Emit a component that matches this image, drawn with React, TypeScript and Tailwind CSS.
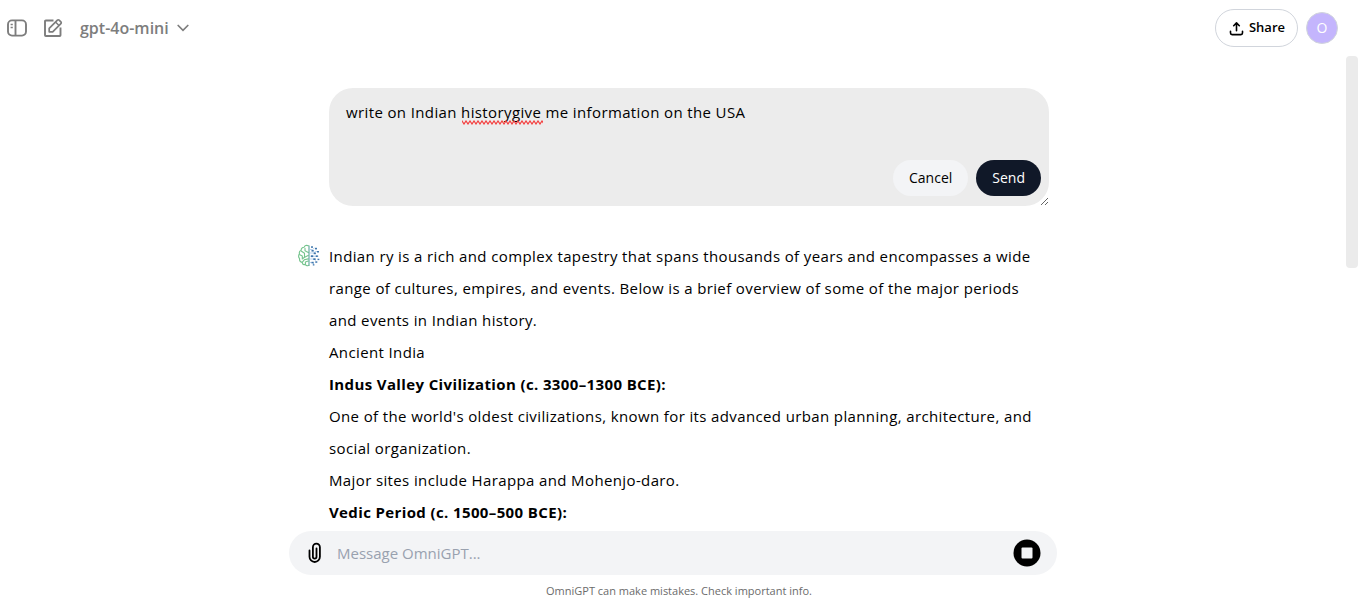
import { useState } from "react";
import type { ReactNode } from "react";

function SidebarIcon() {
  return (
    <svg width="20" height="20" viewBox="0 0 20 20" fill="none" stroke="currentColor" strokeWidth="1.9" aria-hidden="true">
      <rect x="1" y="2.400" width="18" height="15.200" rx="4" />
      <path d="M8.500 2.400v15.200" />
      <path d="M3.600 6.500h2.200M3.600 9.500h2.200" strokeWidth="1.500" />
    </svg>
  );
}

function EditIcon() {
  return (
    <svg width="20" height="20" viewBox="0 0 20 20" fill="none" stroke="currentColor" strokeWidth="1.900" aria-hidden="true">
      <path d="M10.500 2.500H2.800a.8.8 0 0 0-.8.8v13.900a.8.8 0 0 0 .8.8h13.900a.8.8 0 0 0 .8-.8V9.500" />
      <path d="M6.200 13.800v-3.500l8.200-8.200a1.200 1.200 0 0 1 1.700 0l1.800 1.800a1.200 1.200 0 0 1 0 1.700l-8.200 8.200z" strokeWidth="1.700" strokeLinejoin="round" />
      <path d="M12.500 4l3.500 3.500" strokeWidth="1.500" />
    </svg>
  );
}

function ShareIcon() {
  return (
    <svg width="15" height="15" viewBox="0 0 15 15" fill="none" stroke="currentColor" strokeWidth="1.600" strokeLinecap="round" strokeLinejoin="round" aria-hidden="true">
      <path d="M7.500 9.800V2.200M4.700 4.700l2.800-2.800 2.800 2.800" />
      <path d="M1.500 10.200v1.800a1.600 1.600 0 0 0 1.600 1.600h8.800a1.600 1.600 0 0 0 1.600-1.600v-1.800" />
    </svg>
  );
}

function ClipIcon() {
  return (
    <svg width="14" height="22" viewBox="0 0 14 22" fill="none" stroke="currentColor" strokeWidth="1.800" strokeLinecap="round" aria-hidden="true">
      <path d="M1.500 8.500v6.300a5.200 5.200 0 0 0 10.400 0V5.200a3.500 3.500 0 0 0-7 0v9.600a1.800 1.800 0 0 0 3.600 0V6.500" />
    </svg>
  );
}

function BrainLogo() {
  return (
    <svg className="mt-1 shrink-0" width="24" height="24" viewBox="0 0 24 24" fill="none" role="img" aria-label="OmniGPT">
      <g stroke="#74c48c" strokeWidth="1.100" strokeLinecap="round" strokeLinejoin="round">
        <path d="M11.300 1.800C9.500.9 7.600 1.600 7.200 3.200 5.300 3.100 4 4.600 4.200 6.300 2.600 7 2 8.500 2.500 10 1.200 11.300 1.400 13.500 2.600 14.500 2.300 16.600 3.500 18 5 18.300 5.400 20 6.900 20.800 8.300 20.500 9.100 21.800 10.600 22 11.300 21.300" />
        <path d="M8 4.200v2.600l3.300 1.800M4.500 7.200l3 2.100v3.200M2.800 10.700l2.500 1.200v3M5.400 14.700l2.300-1.500 3.400-1.600M5.200 18.300l2-2.500 4-.9M8.400 20.300v-2.200l2.800-1" />
      </g>
      <path d="M12 1.500v20.500" stroke="#4a9c8c" strokeWidth="1" />
      <g stroke="#a3c4e6" strokeWidth=".8">
        <path d="M12.500 5.500h3l2-1.500M12.500 9h4l2-1.500h2M12.500 12.200h9M12.500 15h4l2.500 1.500M12.500 18.500h3l1.500 1.500" />
      </g>
      <g fill="#3f77ad">
        <rect x="14" y="2.300" width="2" height="1.500" />
        <rect x="18" y="3.800" width="2" height="1.600" />
        <rect x="14.500" y="6" width="2.200" height="1.600" />
        <rect x="20" y="7" width="2" height="1.500" />
        <rect x="16.700" y="8.500" width="2.200" height="1.700" />
        <rect x="14" y="11.300" width="2.200" height="1.800" />
        <rect x="18.800" y="11.400" width="2" height="1.600" />
        <rect x="16.300" y="14.300" width="2.300" height="1.700" />
        <rect x="20.500" y="14.700" width="1.800" height="1.400" />
        <rect x="18.300" y="17.300" width="2" height="1.500" />
        <rect x="14.500" y="17.800" width="2.200" height="1.600" />
        <rect x="15.800" y="20.200" width="1.600" height="1.300" />
      </g>
    </svg>
  );
}

function Squiggle() {
  return (
    <svg className="pointer-events-none absolute left-[133px] top-8" width="81" height="5" aria-hidden="true">
      <defs>
        <pattern id="wave" width="4" height="5" patternUnits="userSpaceOnUse">
          <path d="M-2 4L0 1L2 4L4 1L6 4" fill="none" stroke="#f43b3b" strokeWidth="1.200" />
        </pattern>
      </defs>
      <rect width="81" height="5" fill="url(#wave)" />
    </svg>
  );
}

function IconButton({ label, children }: { label: string; children: ReactNode }) {
  return (
    <button type="button" aria-label={label} className="flex size-5 items-center justify-center text-[#7d7d7d]">
      {children}
    </button>
  );
}

export default function App() {
  const [prompt, setPrompt] = useState("write on Indian historygive me information on the USA");
  const [message, setMessage] = useState("");

  return (
    <div className="flex h-screen flex-col bg-white font-['Segoe_UI','Open_Sans',sans-serif] text-black">
      <header className="flex h-14 shrink-0 items-center justify-between pl-[7px] pr-5">
        <div className="flex items-center gap-4">
          <IconButton label="Toggle sidebar"><SidebarIcon /></IconButton>
          <IconButton label="New chat"><EditIcon /></IconButton>
          <button type="button" className="flex items-center gap-2 pl-px text-base font-semibold text-[#7d7d7d]">
            gpt-4o-mini
            <svg width="12" height="8" viewBox="0 0 12 8" fill="none" stroke="currentColor" strokeWidth="1.700" strokeLinecap="round" aria-hidden="true">
              <path d="M1.200 1.500L6 6.300l4.800-4.800" />
            </svg>
          </button>
        </div>
        <div className="flex items-center gap-2">
          <button type="button" className="flex h-[38px] items-center gap-1 rounded-full border border-gray-300 px-3 text-[13px] font-semibold">
            <span className="flex w-[17px] justify-center"><ShareIcon /></span>
            Share
          </button>
          <button type="button" aria-label="Account" className="size-8 rounded-full border border-gray-300 bg-[#c4b5fd] text-sm text-white">
            O
          </button>
        </div>
      </header>

      <div className="flex min-h-0 flex-1">
        <main className="min-w-0 flex-1 overflow-hidden pt-8">
          <div className="mx-auto max-w-3xl px-2">
            <div className="relative ml-8">
              <textarea
                aria-label="Edit message"
                value={prompt}
                spellCheck={false}
                onChange={(event) => setPrompt(event.target.value)}
                className="block h-[118px] w-full resize rounded-3xl bg-[#ececec] px-[17px] py-3 text-[15px] leading-6 tracking-wide outline-none"
              />
              <Squiggle />
              <div className="absolute bottom-[10px] right-2 flex gap-2 text-sm">
                <button type="button" className="h-9 rounded-full bg-gray-100 px-4">Cancel</button>
                <button type="button" className="h-9 rounded-full bg-gray-900 px-4 text-white">Send</button>
              </div>
            </div>

            <article className="mt-[34px] flex gap-2 text-[15px] leading-8 tracking-wide">
              <BrainLogo />
              <div className="min-w-0 flex-1">
                <p>
                  Indian ry is a rich and complex tapestry that spans thousands of years and encompasses a wide
                  range of cultures, empires, and events. Below is a brief overview of some of the major periods
                  and events in Indian history.
                </p>
                <p>Ancient India</p>
                <h3 className="font-bold">Indus Valley Civilization (c. 3300–1300 BCE):</h3>
                <p>
                  One of the world's oldest civilizations, known for its advanced urban planning, architecture, and
                  social organization.
                </p>
                <p>Major sites include Harappa and Mohenjo-daro.</p>
                <h3 className="font-bold">Vedic Period (c. 1500–500 BCE):</h3>
              </div>
            </article>
          </div>
        </main>
        <div className="w-3 shrink-0">
          <div className="h-[212px] rounded-sm bg-[#ebebeb]" />
        </div>
      </div>

      <footer className="shrink-0">
        <div className="pr-3">
          <form className="mx-auto flex h-11 max-w-3xl items-center rounded-full bg-gray-100 pl-[19px] pr-4">
            <button type="button" aria-label="Attach file"><ClipIcon /></button>
            <input
              type="text"
              aria-label="Message"
              placeholder="Message OmniGPT..."
              value={message}
              onChange={(event) => setMessage(event.target.value)}
              className="ml-[15px] min-w-0 flex-1 bg-transparent text-[15px] outline-none placeholder:text-gray-400"
            />
            <button type="button" aria-label="Stop generating">
              <svg width="28" height="28" viewBox="0 0 28 28" aria-hidden="true">
                <circle cx="14" cy="14" r="13.500" fill="#000" />
                <rect x="8.500" y="8.500" width="11" height="11" rx="1" fill="#f3f4f6" />
              </svg>
            </button>
          </form>
        </div>
        <p className="py-2 text-center text-[11px] leading-4 text-[#6b6b6b]">OmniGPT can make mistakes. Check important info.</p>
      </footer>
    </div>
  );
}
